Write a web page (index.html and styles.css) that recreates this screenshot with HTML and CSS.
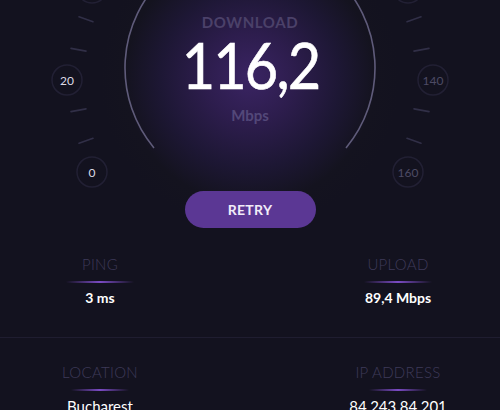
FILE: index.html
```html
<!DOCTYPE html>
<html>
<head>
<meta charset="utf-8">
<link rel="stylesheet" href="styles.css">
</head>
<body>
<div class="app">
  <div class="gauge">
    <svg class="dial" width="500" height="190" viewBox="0 0 500 190">
      <path class="arc" d="M 154 148 A 125 125 0 1 1 346 148" />
      <g class="ticks">
        <line x1="71" y1="48.4" x2="86" y2="51.1" />
        <line x1="79" y1="16.7" x2="93" y2="21.8" />
        <line x1="71" y1="111.6" x2="86" y2="108.9" />
        <line x1="79" y1="143.3" x2="93" y2="138.2" />
        <line x1="429" y1="48.4" x2="414" y2="51.1" />
        <line x1="421" y1="16.7" x2="407" y2="21.8" />
        <line x1="429" y1="111.6" x2="414" y2="108.9" />
        <line x1="421" y1="143.3" x2="407" y2="138.2" />
      </g>
      <g class="marks">
        <circle cx="92" cy="-12" r="15" />
        <circle cx="67" cy="80" r="15" />
        <circle cx="92" cy="172" r="15" />
        <circle cx="408" cy="-12" r="15" />
        <circle cx="433" cy="80" r="15" />
        <circle cx="408" cy="172" r="15" />
      </g>
      <text class="num lit" x="67" y="84.5">20</text>
      <text class="num lit" x="92" y="176.5">0</text>
      <text class="num dim" x="433" y="84.5">140</text>
      <text class="num dim" x="408" y="176.5">160</text>
    </svg>
    <div class="readout">
      <div class="dl-label">DOWNLOAD</div>
      <div class="dl-value"><span class="dl-digits">116,2</span></div>
      <div class="dl-unit">Mbps</div>
    </div>
  </div>
  <div class="action">
    <button class="retry">RETRY</button>
  </div>
  <div class="stats">
    <div class="stat">
      <div class="label">PING</div>
      <div class="rule"></div>
      <div class="value">3 ms</div>
    </div>
    <div class="stat">
      <div class="label">UPLOAD</div>
      <div class="rule"></div>
      <div class="value">89,4 Mbps</div>
    </div>
  </div>
  <div class="divider"></div>
  <div class="stats info">
    <div class="stat">
      <div class="label">LOCATION</div>
      <div class="rule short"></div>
      <div class="value light">Bucharest</div>
    </div>
    <div class="stat">
      <div class="label">IP ADDRESS</div>
      <div class="rule short"></div>
      <div class="value light">84.243.84.201</div>
    </div>
  </div>
</div>
</body>
</html>
```

FILE: styles.css
```css
html, body {
  margin: 0;
  padding: 0;
  background: #13121f;
}
body {
  width: 500px;
  height: 410px;
  overflow: hidden;
  font-family: "Lato", "Noto Sans", sans-serif;
}
.app {
  width: 500px;
  height: 410px;
  overflow: hidden;
  background:
    radial-gradient(circle at 250px 78px, #3a2463 0, #2d1d4d 45px, #1d1734 90px, #14131f 125px, #13121f 150px);
}
.gauge {
  position: relative;
  height: 183px;
}
.dial {
  position: absolute;
  left: 0;
  top: 0;
  overflow: visible;
}
.arc {
  fill: none;
  stroke: #5f5b7a;
  stroke-width: 1.6;
}
.ticks line {
  stroke: #312f47;
  stroke-width: 1.6;
  stroke-linecap: round;
}
.marks circle {
  fill: none;
  stroke: #222034;
  stroke-width: 1.5;
}
.num {
  font-family: "Lato", sans-serif;
  font-size: 12px;
  text-anchor: middle;
}
.num.lit { fill: #dcdae6; }
.num.dim { fill: #4d4a64; }
.readout {
  position: relative;
  padding-top: 12px;
  text-align: center;
}
.dl-label {
  font-size: 15px;
  line-height: 20px;
  letter-spacing: 0.6px;
  color: #4b4169;
  font-weight: 700;
}
.dl-value {
  margin-top: 4px;
  font-size: 64px;
  line-height: 58px;
  height: 58px;
  color: #ffffff;
}
.dl-digits {
  display: inline-block;
  letter-spacing: -2px;
  transform: scaleX(0.9);
  -webkit-text-stroke: 0.6px #ffffff;
  margin-right: -2px;
}
.dl-unit {
  margin-top: 11px;
  font-size: 15px;
  line-height: 20px;
  color: #534879;
  font-weight: 700;
}
.action {
  display: flex;
  justify-content: center;
  padding-top: 8px;
}
.retry {
  width: 131px;
  height: 37px;
  border: none;
  border-radius: 19px;
  background: #5b3794;
  color: #f1ecf8;
  font-family: "Lato", sans-serif;
  font-weight: 700;
  font-size: 14px;
  letter-spacing: 0.3px;
  padding: 0;
}
.stats {
  display: flex;
  justify-content: space-between;
  padding: 26px 0 29px;
}
.stat {
  width: 200px;
  display: flex;
  flex-direction: column;
  align-items: center;
}
.stat:last-child { margin-right: 2px; }
.label {
  font-size: 15px;
  line-height: 20px;
  color: #3e3a59;
  font-weight: 300;
  letter-spacing: 0.3px;
}
.rule {
  margin-top: 7px;
  width: 68px;
  height: 2px;
  background: linear-gradient(90deg, rgba(123,75,196,0) 0%, #7b4bc4 50%, rgba(123,75,196,0) 100%);
}
.rule.short { width: 58px; }
.value {
  margin-top: 5px;
  font-size: 14px;
  line-height: 20px;
  color: #ffffff;
  font-weight: 700;
}
.value.light { font-weight: 400; font-size: 15px; }
.divider {
  height: 1px;
  background: #1f1d30;
}
.info {
  padding-top: 24px;
}
```
